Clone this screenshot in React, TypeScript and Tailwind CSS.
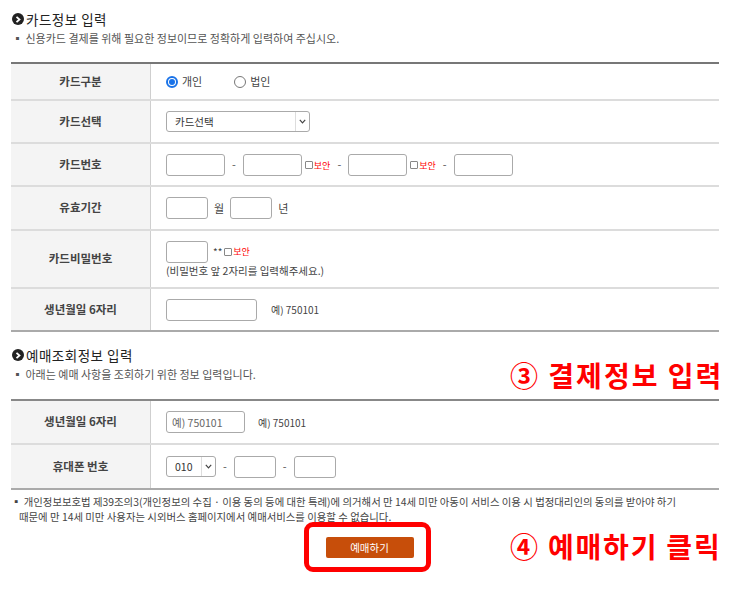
import React from "react";

const font = { fontFamily: '"Noto Sans CJK KR", "Noto Sans", sans-serif' };

function Bullet() {
  return (
    <span className="inline-flex items-center justify-center w-[12px] h-[12px] rounded-full bg-[#222] mr-[2px] shrink-0">
      <svg width="6" height="7" viewBox="0 0 6 7">
        <path d="M1.5 0.8 L4.5 3.5 L1.5 6.2" stroke="#fff" strokeWidth="1.8" fill="none" />
      </svg>
    </span>
  );
}

function SectionTitle({ title, desc }: { title: string; desc: string }) {
  return (
    <div className="pl-[12px]">
      <div className="flex items-center h-[18px] text-[13.5px] text-[#222] tracking-[0.5px]">
        <Bullet />
        {title}
      </div>
      <div className="mt-[2px] text-[11px] text-[#555] leading-[16px]">▪ {desc}</div>
    </div>
  );
}

function Box({ w, placeholder }: { w: string; placeholder?: string }) {
  return (
    <input
      className={`${w} h-[22px] border border-[#aaa] rounded-[3px] bg-white px-[5px] text-[10.5px] text-[#333] placeholder-[#666] outline-none`}
      placeholder={placeholder}
    />
  );
}

function Secure() {
  return (
    <span className="inline-flex items-center">
      <span className="w-[8px] h-[8px] border border-[#888] rounded-[1px] bg-white" />
      <span className="text-[9px] text-[#f00] ml-[1px] leading-none">보안</span>
    </span>
  );
}

function Dash() {
  return <span className="text-[11px] text-[#555] px-[7px]">-</span>;
}

function SelectBox({ w, label }: { w: string; label: string }) {
  return (
    <div className={`${w} h-[21px] border border-[#aaa] rounded-[3px] bg-white flex items-center justify-between text-[10.5px] text-[#333]`}>
      <span className="pl-[8px]">{label}</span>
      <span className="h-full w-[14px] border-l border-[#ddd] flex items-center justify-center">
        <svg width="7" height="5" viewBox="0 0 7 5">
          <path d="M0.8 0.8 L3.5 3.8 L6.2 0.8" stroke="#444" strokeWidth="1.2" fill="none" />
        </svg>
      </span>
    </div>
  );
}

function Row({ label, h, children, last }: { label: string; h: string; children: React.ReactNode; last?: boolean }) {
  return (
    <div className={`flex ${h} ${last ? "" : "border-b-2 border-[#dcdcdc]"}`}>
      <div className="w-[140px] shrink-0 bg-[#f4f4f4] border-r border-[#cfcfcf] flex items-center justify-center text-[11.5px] font-bold text-[#444]">
        {label}
      </div>
      <div className="flex-1 pl-[15px] flex items-center text-[11px] text-[#444]">{children}</div>
    </div>
  );
}

export default function App() {
  return (
    <div className="relative w-[741px] h-[591px] bg-white overflow-hidden" style={font}>
      <div className="pt-[10px]">
        <SectionTitle title="카드정보 입력" desc="신용카드 결제를 위해 필요한 정보이므로 정확하게 입력하여 주십시오." />
      </div>

      <div className="ml-[11px] w-[708px] mt-[16px] border-t-2 border-[#777] border-b-2 border-b-[#aaa]">
        <Row label="카드구분" h="h-[37px]">
          <label className="flex items-center">
            <span className="w-[12px] h-[12px] rounded-full border-2 border-[#1a73e8] flex items-center justify-center">
              <span className="w-[6px] h-[6px] rounded-full bg-[#1a73e8]" />
            </span>
            <span className="ml-[4px]">개인</span>
          </label>
          <label className="flex items-center ml-[32px]">
            <span className="w-[12px] h-[12px] rounded-full border border-[#777]" />
            <span className="ml-[4px]">법인</span>
          </label>
        </Row>
        <Row label="카드선택" h="h-[43px]">
          <SelectBox w="w-[144px]" label="카드선택" />
        </Row>
        <Row label="카드번호" h="h-[43px]">
          <Box w="w-[59px]" />
          <Dash />
          <Box w="w-[59px]" />
          <span className="ml-[3px]"><Secure /></span>
          <Dash />
          <Box w="w-[59px]" />
          <span className="ml-[3px]"><Secure /></span>
          <Dash />
          <Box w="w-[59px]" />
        </Row>
        <Row label="유효기간" h="h-[44px]">
          <Box w="w-[42px]" />
          <span className="mx-[6px]">월</span>
          <Box w="w-[42px]" />
          <span className="mx-[6px]">년</span>
        </Row>
        <Row label="카드비밀번호" h="h-[58px]">
          <div className="flex flex-col">
            <div className="flex items-center">
              <Box w="w-[42px]" />
              <span className="ml-[5px] mr-[2px] text-[10px]">**</span>
              <Secure />
            </div>
            <div className="text-[10.5px] leading-[14px] mt-[1px]">(비밀번호 앞 2자리를 입력해주세요.)</div>
          </div>
        </Row>
        <Row label="생년월일 6자리" h="h-[41px]" last>
          <Box w="w-[91px]" />
          <span className="ml-[14px] text-[10px]">예) 750101</span>
        </Row>
      </div>

      <div className="mt-[14px]">
        <SectionTitle title="예매조회정보 입력" desc="아래는 예매 사항을 조회하기 위한 정보 입력입니다." />
      </div>

      <div className="ml-[11px] w-[708px] mt-[17px] border-t-2 border-[#888] border-b-2 border-b-[#aaa]">
        <Row label="생년월일 6자리" h="h-[44px]">
          <Box w="w-[79px]" placeholder="예) 750101" />
          <span className="ml-[13px] text-[10px]">예) 750101</span>
        </Row>
        <Row label="휴대폰 번호" h="h-[43px]" last>
          <SelectBox w="w-[50px]" label="010" />
          <Dash />
          <Box w="w-[42px]" />
          <Dash />
          <Box w="w-[42px]" />
        </Row>
      </div>

      <div className="pl-[11px] mt-[4px] text-[10.4px] leading-[15px] text-[#444] whitespace-nowrap">
        <div>▪ 개인정보보호법 제39조의3(개인정보의 수집 · 이용 동의 등에 대한 특례)에 의거해서 만 14세 미만 아동이 서비스 이용 시 법정대리인의 동의를 받아야 하기</div>
        <div className="pl-[8px]">때문에 만 14세 미만 사용자는 시외버스 홈페이지에서 예매서비스를 이용할 수 없습니다.</div>
      </div>

      <div className="flex justify-center mt-[13px] pr-[2px]">
        <button className="w-[88px] h-[21px] bg-[#c74e0a] rounded-[2px] text-white text-[10.5px]">예매하기</button>
      </div>

      <div className="absolute left-[304px] top-[522px] w-[127px] h-[50px] border-[5px] border-[#f00] rounded-[9px]" />
      <div className="absolute left-[510px] top-[358px] text-[28px] font-bold text-[#f00] leading-[34px] tracking-[2px] whitespace-nowrap">
        ③ 결제정보 입력
      </div>
      <div className="absolute left-[510px] top-[529px] text-[28px] font-bold text-[#f00] leading-[34px] tracking-[1.8px] whitespace-nowrap">
        ④ 예매하기 클릭
      </div>
    </div>
  );
}
